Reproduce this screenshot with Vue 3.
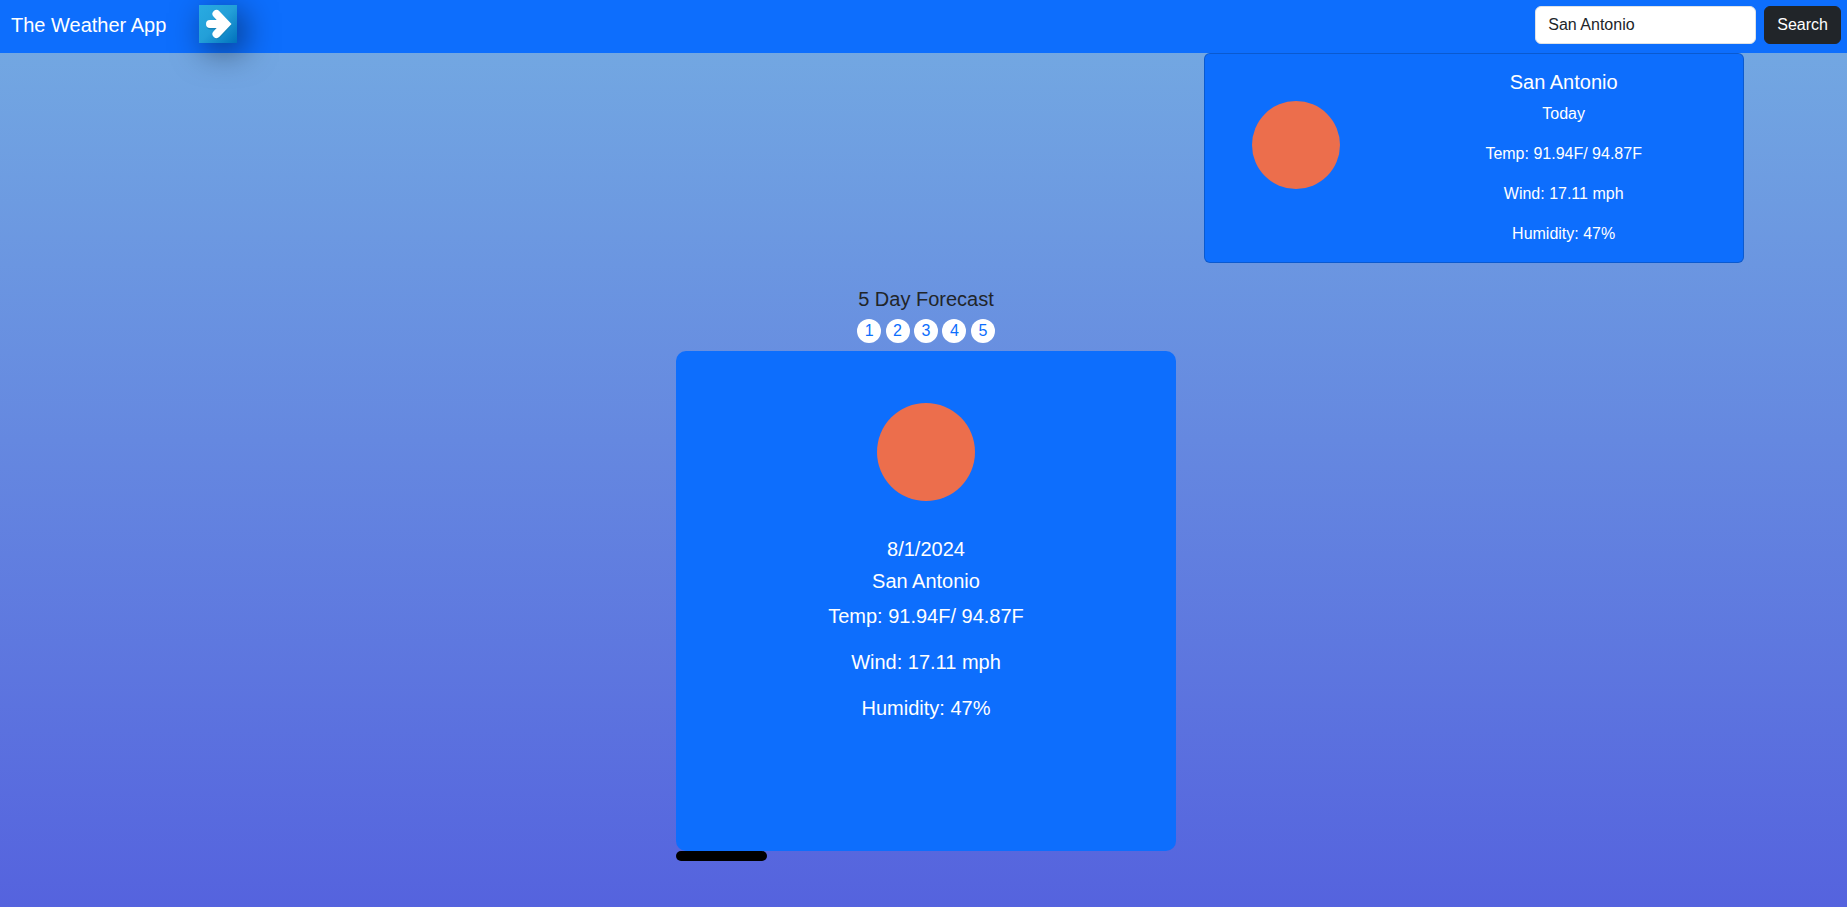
<script setup>
import { ref } from 'vue'

const city = ref('San Antonio')
const days = [1, 2, 3, 4, 5]
const weather = {
  city: 'San Antonio',
  date: '8/1/2024',
  lines: ['Temp: 91.94F/ 94.87F', 'Wind: 17.11 mph', 'Humidity: 47%'],
}
</script>

<template>
  <div class="page">
    <header class="navbar">
      <a class="brand" href="#">The Weather App</a>
      <button class="go" type="button" aria-label="Go">
        <svg viewBox="0 0 38 38" aria-hidden="true">
          <defs>
            <linearGradient id="tile" x1="0" y1="0" x2="1" y2="1">
              <stop offset="0" stop-color="#29abe2" />
              <stop offset="0.5" stop-color="#239fd8" />
              <stop offset="1" stop-color="#0071bc" />
            </linearGradient>
          </defs>
          <rect width="38" height="38" fill="url(#tile)" />
          <g fill="none" stroke-width="8" stroke-linecap="round">
            <path d="M11.5 20.5H27M18.5 10.5L27.5 20L18.5 30" stroke="#1685ba" />
            <path d="M11 19H26M17.5 9L27 19L17.5 29" stroke="#fff" />
          </g>
        </svg>
      </button>
      <form class="search" @submit.prevent>
        <input v-model="city" class="field" type="text" aria-label="City" />
        <button class="submit" type="submit">Search</button>
      </form>
    </header>

    <main>
      <section class="today">
        <div class="today-icon">
          <div class="sun sun-small"></div>
        </div>
        <div class="today-body">
          <h5>{{ weather.city }}</h5>
          <p>Today</p>
          <p v-for="line in weather.lines" :key="line">{{ line }}</p>
        </div>
      </section>

      <section class="forecast">
        <h5>5 Day Forecast</h5>
        <nav class="days">
          <template v-for="day in days" :key="day"><button class="day" type="button">{{ day }}</button>{{ ' ' }}</template>
        </nav>
        <article class="card">
          <div class="sun sun-large"></div>
          <h5>{{ weather.date }}</h5>
          <h5>{{ weather.city }}</h5>
          <p v-for="line in weather.lines" :key="line">{{ line }}</p>
        </article>
        <div class="progress"></div>
      </section>
    </main>
  </div>
</template>

<style>
body {
  margin: 0;
}
</style>

<style scoped>
* {
  box-sizing: border-box;
}

.page {
  min-height: 100vh;
  background: linear-gradient(#74abe2, #5563de);
  color: #212529;
  font: 16px/24px "Liberation Sans", Arial, sans-serif;
}

.navbar {
  display: flex;
  align-items: flex-start;
  padding: 5px 6px 8px 11px;
  background: #0d6efd;
}

.brand {
  margin-right: 33px;
  padding: 5px 0;
  color: #fff;
  font-size: 20px;
  line-height: 30px;
  text-decoration: none;
}

.go {
  width: 38px;
  height: 38px;
  padding: 0;
  border: 0;
  background: none;
  box-shadow: 6px 8px 32px rgba(0, 0, 0, 0.5);
}

.go svg {
  display: block;
}

.search {
  display: flex;
  gap: 8px;
  margin: 1px 0 0 auto;
}

.field {
  width: 221px;
  height: 38px;
  padding: 6px 12px;
  border: 1px solid #dee2e6;
  border-radius: 6px;
  background: #fff;
  color: #212529;
  font: inherit;
}

.submit {
  height: 38px;
  padding: 6px 12px;
  border: 1px solid #212529;
  border-radius: 6px;
  background: #212529;
  color: #fff;
  font: inherit;
}

main {
  padding-left: 5px;
}

h5,
p {
  margin: 0;
  font-weight: 400;
}

h5 {
  margin-bottom: 8px;
  font-size: 20px;
  line-height: 24px;
}

p + p {
  margin-top: 16px;
}

.today {
  display: grid;
  grid-template-columns: 1fr 2fr;
  max-width: 540px;
  margin-left: auto;
  margin-right: 103px;
  border: 1px solid rgba(0, 0, 0, 0.175);
  border-radius: 6px;
  background: #0d6efd;
  color: #fff;
}

.today-icon {
  display: flex;
  justify-content: center;
  padding: 47px 0 0 2px;
}

.today-body {
  padding: 16px;
  text-align: center;
}

.sun {
  border-radius: 50%;
  background: #ec6e4c;
}

.sun-small {
  width: 88px;
  height: 88px;
}

.sun-large {
  width: 98px;
  height: 98px;
  margin: 52px auto 36px;
}

.forecast {
  width: 500px;
  max-width: 100%;
  margin: 0 auto;
  padding-top: 24px;
  text-align: center;
}

.days {
  margin-bottom: 8px;
}

.day {
  width: 24px;
  height: 24px;
  padding: 0;
  border: 0;
  border-radius: 50%;
  background: #fff;
  color: #0d6efd;
  font: inherit;
}

.card {
  display: flow-root;
  min-height: 500px;
  border-radius: 10px;
  background: #0d6efd;
  color: #fff;
}

.card p {
  font-size: 20px;
  line-height: 30px;
}

.progress {
  width: 91px;
  height: 10px;
  border-radius: 5px;
  background: #000;
}
</style>
